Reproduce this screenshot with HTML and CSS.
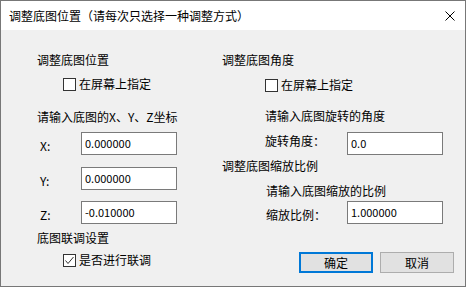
FILE: index.html
```html
<!DOCTYPE html>
<html lang="zh-CN">
<head>
    <meta charset="UTF-8">
    <title>调整底图位置</title>
    <link rel="stylesheet" href="styles.css">
</head>
<body>
    <div class="dialog">
        <div class="titlebar">
            <span class="title">调整底图位置（请每次只选择一种调整方式）</span>
            <svg class="close" width="10" height="10" viewBox="0 0 10 10">
                <path d="M0.5 0.5 L9.5 9.5 M9.5 0.5 L0.5 9.5" stroke="#000" stroke-width="1" fill="none"/>
            </svg>
        </div>
        <div class="content">
            <div class="col col-left">
                <div class="heading">调整底图位置</div>
                <div class="check check-pos"><span class="box"></span>在屏幕上指定</div>
                <div class="hint hint-xyz">请输入底图的X、Y、Z坐标</div>
                <div class="field field-x"><span class="flabel">X:</span><input class="edit" value="0.000000"></div>
                <div class="field field-y"><span class="flabel">Y:</span><input class="edit" value="0.000000"></div>
                <div class="field field-z"><span class="flabel">Z:</span><input class="edit" value="-0.010000"></div>
                <div class="heading heading-link">底图联调设置</div>
                <div class="check check-link">
                    <span class="box">
                        <svg width="11" height="11" viewBox="0 0 11 11"><path d="M1.5 5.5 L4 8.5 L9.5 2" stroke="#333" stroke-width="1" fill="none"/></svg>
                    </span>是否进行联调
                </div>
            </div>
            <div class="col col-right">
                <div class="heading">调整底图角度</div>
                <div class="check check-angle"><span class="box"></span>在屏幕上指定</div>
                <div class="hint hint-angle">请输入底图旋转的角度</div>
                <div class="field field-angle"><span class="flabel">旋转角度：</span><input class="edit" value="0.0"></div>
                <div class="heading heading-scale">调整底图缩放比例</div>
                <div class="hint hint-scale">请输入底图缩放的比例</div>
                <div class="field field-scale"><span class="flabel">缩放比例：</span><input class="edit" value="1.000000"></div>
                <div class="buttons">
                    <button class="btn btn-default">确定</button>
                    <button class="btn">取消</button>
                </div>
            </div>
        </div>
    </div>
</body>
</html>
```

FILE: styles.css
```css
body {
    margin: 0;
    padding: 0;
    background-color: #f0f0f0;
    font-family: "Noto Sans CJK SC", "Noto Sans", sans-serif;
    font-size: 12px;
    color: #000;
}
.dialog {
    width: 466px;
    height: 287px;
    box-sizing: border-box;
    border: 1px solid #777;
    background-color: #f0f0f0;
    display: flex;
    flex-direction: column;
}
.titlebar {
    height: 29px;
    background-color: #fff;
    display: flex;
    align-items: center;
    justify-content: space-between;
    padding: 0 10px 0 8px;
}
.title {
    line-height: 16px;
}
.close {
    display: block;
}
.content {
    display: flex;
    padding-left: 36px;
}
.col {
    display: flex;
    flex-direction: column;
    align-items: flex-start;
}
.col-left {
    width: 185px;
}
.col-right {
    flex: 1;
}
.heading, .hint, .check {
    line-height: 16px;
    height: 16px;
    white-space: nowrap;
}
.heading {
    margin-top: 22px;
}
.check {
    display: flex;
    align-items: center;
}
.box {
    width: 13px;
    height: 13px;
    box-sizing: border-box;
    border: 1px solid #333;
    background-color: #fff;
    margin-right: 3px;
    display: flex;
    align-items: center;
    justify-content: center;
}
.box svg {
    display: block;
}
.field {
    display: flex;
    align-items: flex-start;
}
.flabel {
    line-height: 16px;
    box-sizing: border-box;
}
.edit {
    width: 96px;
    height: 23px;
    box-sizing: border-box;
    border: 1px solid #7a7a7a;
    background-color: #fff;
    padding: 0 0 1px 3px;
    margin: 0;
    font-family: "Noto Sans CJK SC", "Noto Sans", sans-serif;
    font-size: 11px;
    color: #000;
    outline: none;
}

/* left column */
.col-left .check { padding-left: 26px; }
.check-pos { margin-top: 8px; }
.hint-xyz { margin-top: 17px; }
.col-left .flabel {
    width: 44px;
    padding-left: 3px;
    padding-top: 6px;
}
.field-x { margin-top: 7px; }
.field-y { margin-top: 12px; }
.field-z { margin-top: 11px; }
.heading-link { margin-top: 6px; }
.check-link { margin-top: 6px; }

/* right column */
.col-right .check { padding-left: 43px; }
.check-angle { margin-top: 9px; }
.hint-angle { margin-top: 15px; padding-left: 43px; }
.col-right .flabel {
    width: 82px;
    padding-left: 43px;
    box-sizing: content-box;
}
.field-angle { margin-top: 8px; }
.field-angle .flabel { padding-top: 1px; }
.heading-scale { margin-top: 3px; }
.hint-scale { margin-top: 9px; padding-left: 44px; }
.field-scale { margin-top: 2px; }
.field-scale .flabel { padding-left: 44px; width: 81px; padding-top: 6px; }

.buttons {
    display: flex;
    gap: 7px;
    margin-top: 28px;
    padding-left: 77px;
}
.btn {
    width: 74px;
    height: 21px;
    box-sizing: border-box;
    border: 1px solid #adadad;
    background-color: #e1e1e1;
    font-family: "Noto Sans CJK SC", "Noto Sans", sans-serif;
    font-size: 12px;
    color: #000;
    padding: 0;
    line-height: 16px;
}
.btn-default {
    border: 2px solid #0078d7;
}
```
